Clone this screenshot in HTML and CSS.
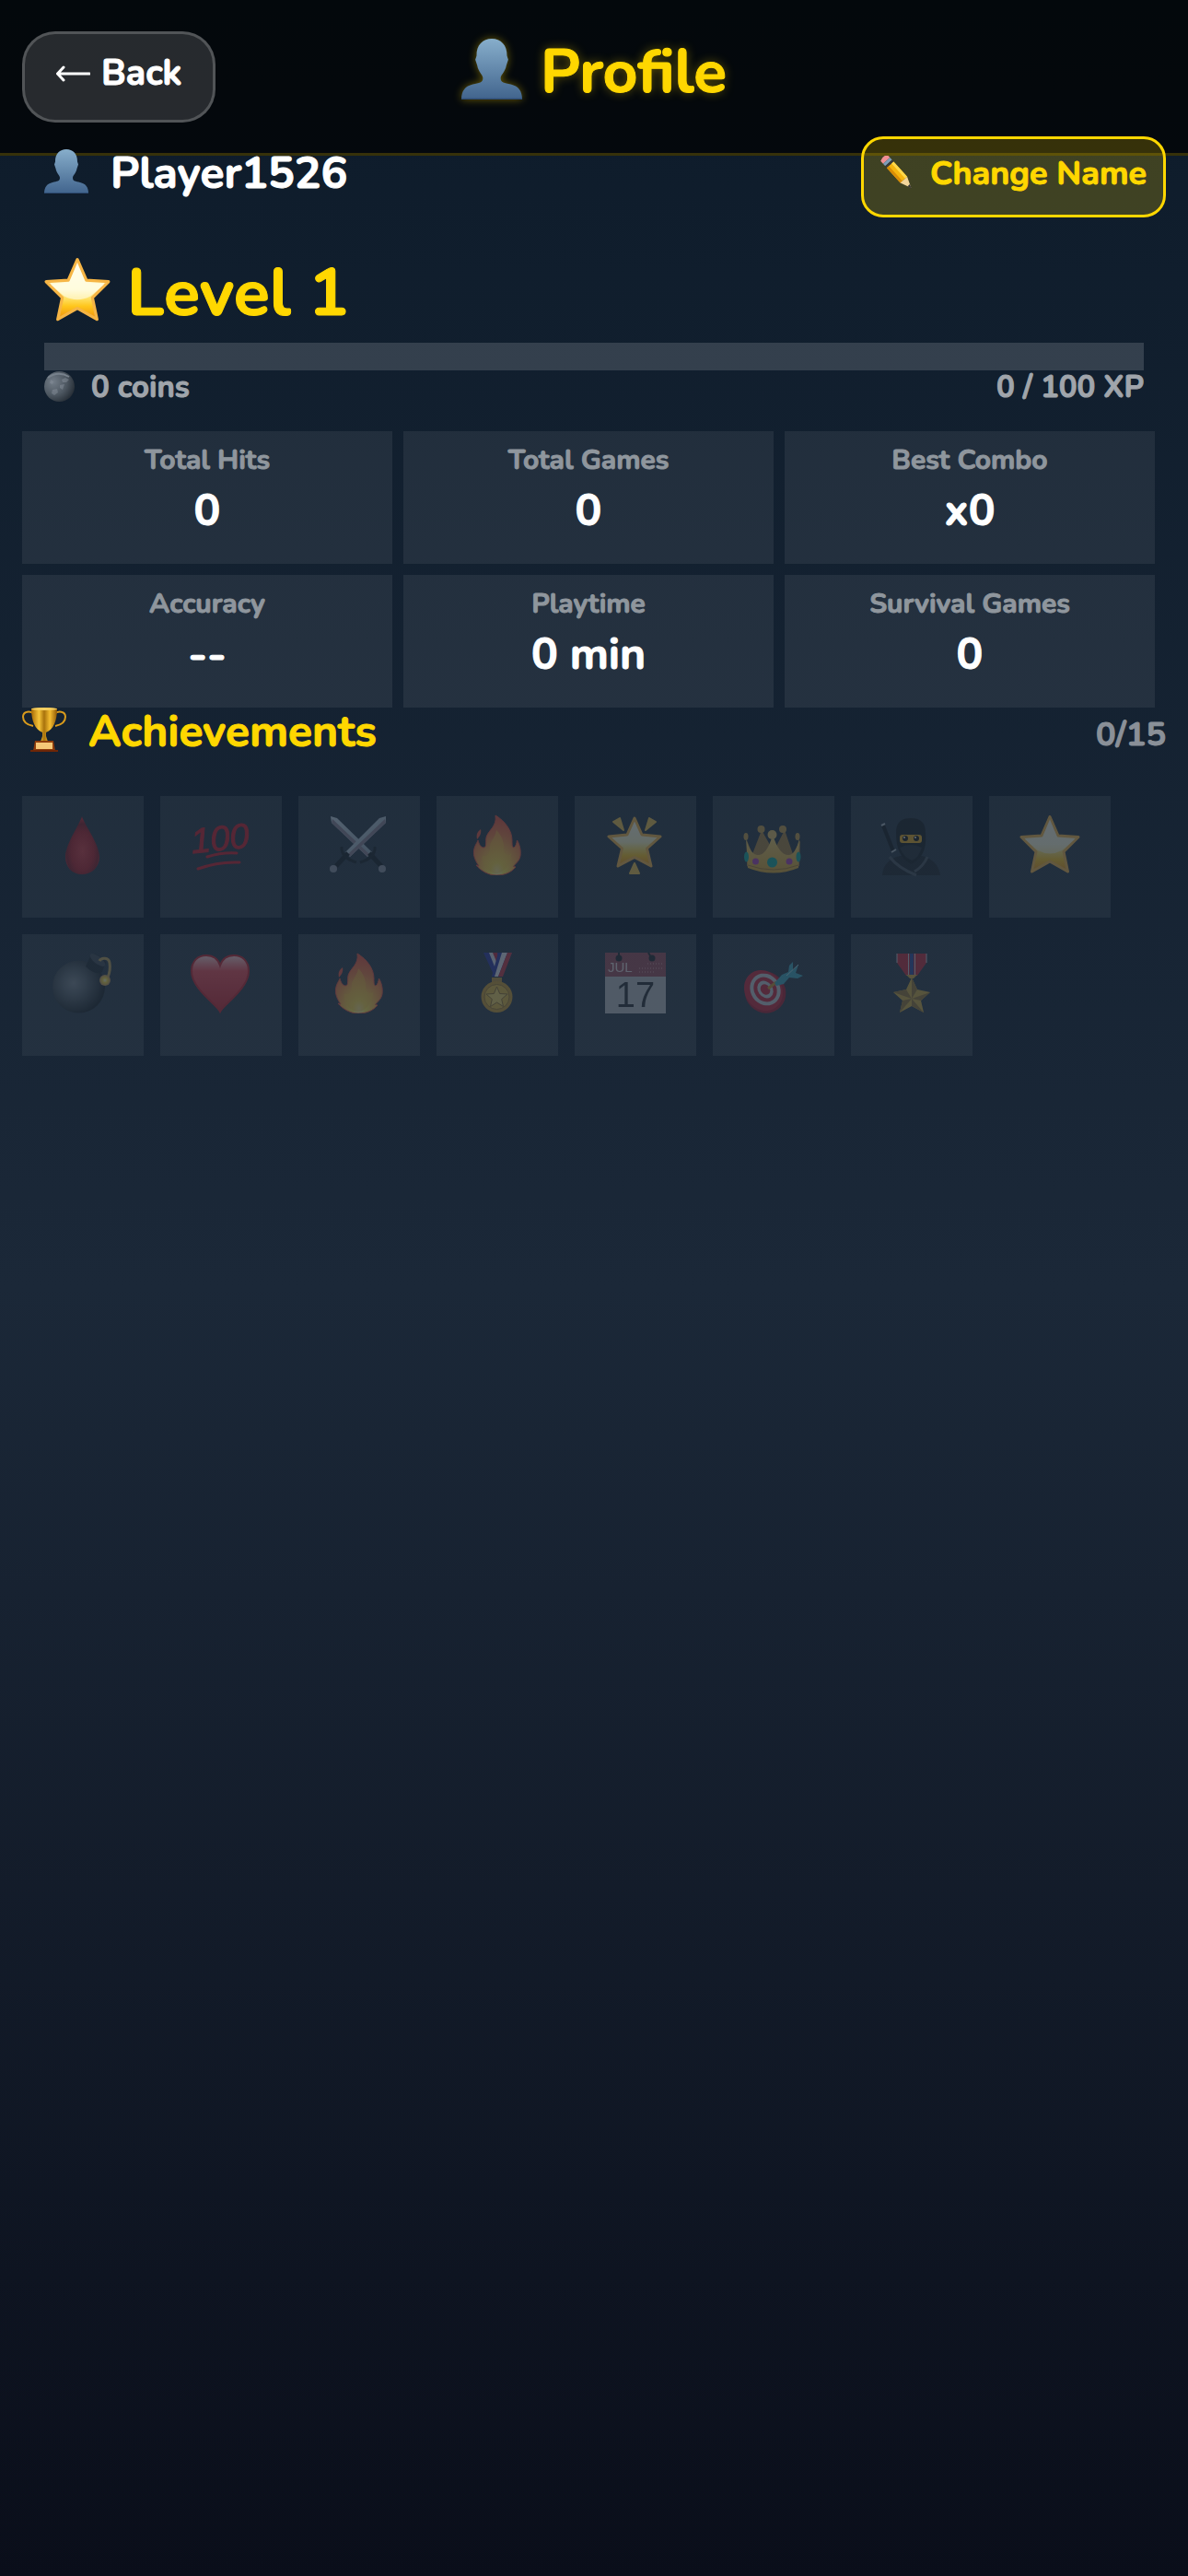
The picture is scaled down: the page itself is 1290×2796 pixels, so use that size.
FILE: index.html
```html
<!DOCTYPE html>
<html lang="en">
<head>
<meta charset="utf-8">
<meta name="viewport" content="width=device-width, initial-scale=1">
<title>Profile</title>
<link rel="stylesheet" href="styles.css">
</head>
<body>
<svg class="defs" width="0" height="0" aria-hidden="true">
  <defs>
    <linearGradient id="bust-fill" x1="0" y1="0" x2="0" y2="1"><stop offset="0" stop-color="#87aecb"/><stop offset="1" stop-color="#41648d"/></linearGradient>
    <linearGradient id="star-fill" x1="0" y1="0" x2="0" y2="1"><stop offset="0" stop-color="#fffdf0"/><stop offset=".5" stop-color="#fff9c8"/><stop offset=".64" stop-color="#ffe36a"/><stop offset=".78" stop-color="#ffc61c"/><stop offset="1" stop-color="#ef8f0c"/></linearGradient>
    <linearGradient id="gold-fill" x1="0" y1="0" x2="1" y2="0"><stop offset="0" stop-color="#a86a05"/><stop offset=".3" stop-color="#f6c53a"/><stop offset=".5" stop-color="#a8720c"/><stop offset=".72" stop-color="#f4bd31"/><stop offset="1" stop-color="#8f5805"/></linearGradient>
    <radialGradient id="coin-fill" cx=".3" cy=".35" r=".8"><stop offset="0" stop-color="#737d88"/><stop offset=".55" stop-color="#4d5761"/><stop offset="1" stop-color="#20272f"/></radialGradient>
    <radialGradient id="drop-fill" cx=".5" cy=".6" r=".55"><stop offset="0" stop-color="#d8343c"/><stop offset=".6" stop-color="#b41722"/><stop offset=".85" stop-color="#84101a"/><stop offset="1" stop-color="#c51c28"/></radialGradient>
    <linearGradient id="heart-fill" x1="0" y1="0" x2="0" y2="1"><stop offset="0" stop-color="#ffd0d4"/><stop offset=".28" stop-color="#ee4450"/><stop offset="1" stop-color="#c41b27"/></linearGradient>
    <radialGradient id="bomb-fill" cx=".4" cy=".43" r=".6"><stop offset="0" stop-color="#78828c"/><stop offset=".35" stop-color="#56616b"/><stop offset="1" stop-color="#10171e"/></radialGradient>
    <radialGradient id="spark-fill"><stop offset="0" stop-color="#fffbd0"/><stop offset=".45" stop-color="#f5d436"/><stop offset="1" stop-color="#b98c5a"/></radialGradient>
    <radialGradient id="fire-fill" cx=".5" cy=".92" r=".85"><stop offset="0" stop-color="#fff8c0"/><stop offset=".16" stop-color="#ffe84a"/><stop offset=".42" stop-color="#f9b13e"/><stop offset=".7" stop-color="#f07a3c"/><stop offset="1" stop-color="#ec5238"/></radialGradient>
    <linearGradient id="crown-fill" x1="0" y1="0" x2="0" y2="1"><stop offset="0" stop-color="#f3cf6c"/><stop offset="1" stop-color="#d6a22c"/></linearGradient>
    <linearGradient id="blade-fill" x1="0" y1="0" x2="1" y2="1"><stop offset="0" stop-color="#c9d8e6"/><stop offset="1" stop-color="#93a7b8"/></linearGradient>
    <symbol id="bust" viewBox="0 0 48 48"><path d="M24 0C31 0 36.300 5 36 13.500L37 16.500L35.500 21C34.700 26 31 28.500 31 31C31 35 34 34.500 39 36C45 37.500 48 41 48 48H0C0 41 3 37.500 9 36C14 34.500 17 35 17 31C17 28.500 13.300 26 12.500 21L11 16.500L12 13.500C11.700 5 17 0 24 0Z" fill="url(#bust-fill)"/><path d="M0 47H48V48H0Z" fill="#2d4a70"/></symbol>
    <symbol id="star" viewBox="0 0 66 66"><path d="M33 2.500L42 23L64 24.500L48 40.500L52.500 62L33 51L13.500 62L18 40.500L2 24.500L24 23Z" fill="url(#star-fill)" stroke="#f6b545" stroke-width="3" stroke-linejoin="round"/><path d="M33 5L41 25L60 27L46 39Q33 46 20 39L6 27L25 25Z" fill="#fffdeb" opacity=".6"/></symbol>
    <symbol id="fire" viewBox="0 0 66 66"><path d="M31 1C41 7 49 17 49 28C49 32 49 36 51 36C53 35 54 31 54.500 28C57 32 59 39 58 45C57 51 52 54 50.500 56.500L53 57C48 63 41 66 32 66C23 66 15 61 10 55L13 56C9 50 7 45 7.500 40C8 34 11 31 12 28C13 32 15 36 18 36C22 36 20 29 21 25C23 17 33 13 31 1Z" fill="url(#fire-fill)" stroke="#e8503c" stroke-width="1"/><path d="M15 16C11 19 10 22 11 27C14 24 16 20 15 16Z" fill="#e8503c"/><path d="M32 17C38 23 41 31 40 39C42 45 46 45 48 42C49 51 42 63 32 64C22 63 15 53 17 44C21 47 25 43 25 35C25 29 31 25 32 17Z" fill="#f9c437" opacity=".5"/></symbol>
  </defs>
</svg>

<header class="topbar">
  <button class="back" type="button">
    <svg class="back-arrow" viewBox="0 0 38 20" aria-hidden="true"><path d="M37 10H3M9 3L2.500 10L9 17" fill="none" stroke="#fff" stroke-width="3" stroke-linecap="round" stroke-linejoin="round"/></svg>
    Back
  </button>
  <h1 class="title"><svg class="icon-title" aria-hidden="true"><use href="#bust"/></svg>Profile</h1>
</header>

<main class="content">
  <section class="player">
    <p class="player-name"><svg class="icon-md" aria-hidden="true"><use href="#bust"/></svg>Player1526</p>
    <button class="rename" type="button">
      <svg class="icon-sm" viewBox="0 0 36 36" aria-hidden="true"><g transform="rotate(48 18 18)"><path d="M-3 13H1V23H-3Q-6 18 -3 13Z" fill="#f08f95"/><path d="M1 13H4.500V23H1Z" fill="#7d9cb8"/><path d="M4.500 13H7V23H4.500Z" fill="#39393b"/><path d="M7 13H29V23H7Z" fill="#f5b50f"/><path d="M7 13H29V16H7Z" fill="#ffd84a"/><path d="M7 20H29V23H7Z" fill="#d88c07"/><path d="M29 13L41 18L29 23Z" fill="#f2d59b"/><path d="M37 16.400L41.500 18L37 19.600Z" fill="#333"/></g></svg>
      Change Name
    </button>
  </section>

  <section class="level">
    <h2 class="level-title"><svg class="icon-lg" aria-hidden="true"><use href="#star"/></svg>Level 1</h2>
    <div class="xp-bar" role="progressbar" aria-label="Experience" aria-valuemin="0" aria-valuemax="100" aria-valuenow="0"><div class="xp-fill" style="width: 0%"></div></div>
    <div class="level-meta">
      <span class="coins"><svg class="icon-coin" viewBox="0 0 33 33" aria-hidden="true"><circle cx="16.500" cy="16.500" r="16.500" fill="url(#coin-fill)"/><path d="M7 9L10 11L9 14L6 13ZM19 9L23 7L27 9L24 12L20 12ZM17 15L22 14L20 20L17 18ZM9 20L14 19L15 23L11 26L8 24Z" fill="#8b95a0" opacity=".45"/><path d="M4 7Q15-1 27 6" fill="none" stroke="#77818c" stroke-width="2"/></svg>0 coins</span>
      <span>0 / 100 XP</span>
    </div>
  </section>

  <dl class="stats">
    <div class="stat"><dt>Total Hits</dt><dd>0</dd></div>
    <div class="stat"><dt>Total Games</dt><dd>0</dd></div>
    <div class="stat"><dt>Best Combo</dt><dd>x0</dd></div>
    <div class="stat"><dt>Accuracy</dt><dd>--</dd></div>
    <div class="stat"><dt>Playtime</dt><dd>0 min</dd></div>
    <div class="stat"><dt>Survival Games</dt><dd>0</dd></div>
  </dl>

  <section>
    <div class="section-head">
      <h2 class="section-title"><svg class="icon-md" viewBox="0 0 48 48" aria-hidden="true"><path d="M13 7C9 3 1 4 1 10C1 16 7 19 12 20M35 7C39 3 47 4 47 10C47 16 41 19 36 20" fill="none" stroke="#d99b1c" stroke-width="2"/><path d="M10 1Q24-1 38 1C38 14 34 24 26 27V31L28 37H20L22 31V27C14 24 10 14 10 1Z" fill="url(#gold-fill)"/><ellipse cx="24" cy="1.500" rx="14" ry="1.500" fill="#f7d163"/><path d="M14 36H34L36 47H12Z" fill="#8e3d0c"/><path d="M9 46H39V48H9Z" fill="#6e2607"/><path d="M15 38H33V45H15Z" fill="#f5c878"/></svg>Achievements</h2>
      <span class="count">0/15</span>
    </div>
    <ul class="badges">
      <li class="badge"><svg viewBox="0 0 66 66" aria-hidden="true"><path d="M32 2C34 10 51 32 51 46C51 57 43 65 32 65C21 65 14 57 14 46C14 32 30 10 32 2Z" fill="url(#drop-fill)"/></svg></li>
      <li class="badge"><svg viewBox="0 0 66 66" aria-hidden="true"><text x="1" y="39" class="hundred" transform="rotate(-6 32 33)">100</text><path d="M18 46Q34 41 50 42M8 59Q30 51 53 52" fill="none" stroke="#cf1624" stroke-width="3" stroke-linecap="round"/></svg></li>
      <li class="badge"><svg viewBox="0 0 66 66" aria-hidden="true"><path d="M2 2L9 4L47 41L42 46L3 9Z" fill="url(#blade-fill)"/><path d="M3 9L42 46L44 43L4 5Z" fill="#8c8193"/><path d="M44 42L57 56" stroke="#0c141b" stroke-width="5"/><path d="M50 35Q51 47 34 52" fill="none" stroke="#10181f" stroke-width="3"/><path d="M62 2L55 4L18 41L23 46L62 9Z" fill="url(#blade-fill)"/><path d="M62 9L23 46L21 43L61 5Z" fill="#8c8193"/><path d="M21 42L8 56" stroke="#0c141b" stroke-width="5"/><path d="M14 35Q13 47 30 52" fill="none" stroke="#10181f" stroke-width="3"/><circle cx="5" cy="59" r="4" fill="#8a90a0"/><circle cx="58" cy="59" r="4" fill="#8a90a0"/></svg></li>
      <li class="badge"><svg aria-hidden="true"><use href="#fire"/></svg></li>
      <li class="badge"><svg viewBox="0 0 66 66" aria-hidden="true"><path d="M32 4L40 22L60 24L45.500 37L50 56L32 46.500L14 56L18.500 37L4 24L24 22Z" fill="url(#star-fill)" stroke="#f6b545" stroke-width="3" stroke-linejoin="round"/><path d="M9 8L16 4L20 17ZM48 4L55 8L44 17ZM32 53L37 64H27Z" fill="#efc04a" stroke="#efc04a" stroke-width="2" stroke-linejoin="round"/></svg></li>
      <li class="badge"><svg viewBox="0 0 66 66" aria-hidden="true"><path d="M4 28L4 56Q33 70 61 56L62 28L54 43L45 17L33 40L20 17L10 43Z" fill="#a67e3c"/><path d="M3 26Q8 44 16 44Q26 44 32 22Q39 44 49 44Q57 44 61 26L60 58Q33 69 5 58Z" fill="url(#crown-fill)"/><path d="M5 55Q33 65 60 55" fill="none" stroke="#a8792a" stroke-width="1"/><circle cx="19.500" cy="16" r="4" fill="#c59b45"/><circle cx="43" cy="16" r="4" fill="#c59b45"/><circle cx="31.500" cy="22" r="5" fill="#e3be62"/><ellipse cx="3" cy="24" rx="2.500" ry="4" fill="#c59b45"/><ellipse cx="59" cy="24" rx="2.500" ry="4" fill="#c59b45"/><circle cx="31.500" cy="52" r="5.500" fill="#0ea79b"/><ellipse cx="3.500" cy="46" rx="2.500" ry="5.500" fill="#0ea79b"/><ellipse cx="60" cy="46" rx="2.500" ry="5.500" fill="#0ea79b"/><circle cx="13.500" cy="51" r="3.500" fill="#a93fb5"/><circle cx="50" cy="51" r="3.500" fill="#a93fb5"/></svg></li>
      <li class="badge"><svg viewBox="0 0 66 66" aria-hidden="true"><path d="M2 12L13 40" stroke="#0c1116" stroke-width="4"/><path d="M0 12L4 10M11 41L16 38" stroke="#a9b4bd" stroke-width="2"/><path d="M1 66C2 54 9 48 20 45L44 45C55 48 62 54 64 66Z" fill="#161d24"/><path d="M16 20C16 8 22 4 32 4C43 4 48 9 48 20C49 34 47 46 33 54C20 48 16 36 16 20Z" fill="#10161c"/><path d="M20 36Q32 30 44 36Q40 48 33 50Q24 46 20 36Z" fill="#1e262e"/><rect x="20" y="22" width="24" height="9" rx="3" fill="#e7a91d"/><circle cx="26" cy="26" r="3" fill="#111"/><circle cx="38" cy="26" r="3" fill="#111"/><circle cx="25" cy="25" r="1" fill="#fff"/><circle cx="37" cy="25" r="1" fill="#fff"/><path d="M9 46Q18 58 38 66M50 46Q46 56 36 62" fill="none" stroke="#414b56" stroke-width="3"/></svg></li>
      <li class="badge"><svg aria-hidden="true"><use href="#star"/></svg></li>
      <li class="badge"><svg viewBox="0 0 66 66" aria-hidden="true"><circle cx="28.500" cy="37" r="28.500" fill="url(#bomb-fill)"/><path d="M36 15L42 2Q47-1 58 10L54 21Q46 25 36 15Z" fill="#18212a"/><ellipse cx="49" cy="8" rx="10" ry="4" transform="rotate(38 49 8)" fill="#39434d"/><path d="M51 9C53 5 61 5 62 11C63 17 62 22 60 27" fill="none" stroke="#b99c52" stroke-width="3"/><circle cx="57" cy="30" r="6" fill="url(#spark-fill)"/></svg></li>
      <li class="badge"><svg viewBox="0 0 66 66" aria-hidden="true"><path d="M32 64C28 56 1 39 1 20C1 9 8 3 17 3C25 3 30 8 32 14C34 8 39 3 47 3C56 3 63 9 63 20C63 39 36 56 32 64Z" fill="url(#heart-fill)" stroke="#c41b27" stroke-width="2"/></svg></li>
      <li class="badge"><svg aria-hidden="true"><use href="#fire"/></svg></li>
      <li class="badge"><svg viewBox="0 0 66 66" aria-hidden="true"><path d="M18 0H34L38 26H30Z" fill="#2632a0"/><path d="M24 0H30L34 14L32 20Z" fill="#d8dce8"/><path d="M28 0H33L35 12H33Z" fill="#b8203a"/><path d="M49 0H34L27 26H38Z" fill="#2632a0"/><path d="M44 0H38L30 26H34Z" fill="#e4e6ee"/><path d="M49 0H44L34 26H39Z" fill="#c33040"/><path d="M27 27H38V33H27Z" fill="#b98e32"/><circle cx="32.500" cy="48" r="17" fill="#c8962a"/><circle cx="32.500" cy="48" r="13.500" fill="#e0b436" stroke="#9c7426" stroke-width="1"/><path d="M32.500 37L35.700 44.500L44 45L37.700 50.500L39.500 58.500L32.500 54L25.500 58.500L27.300 50.500L21 45L29.300 44.500Z" fill="#efd05a" stroke="#8f6a24" stroke-width="1"/></svg></li>
      <li class="badge"><svg viewBox="0 0 66 66" aria-hidden="true"><path d="M0 0H66V66H0Z" fill="#b9bdc2"/><path d="M0 0H66V26H0Z" fill="#984856"/><circle cx="15" cy="6" r="3.500" fill="#1a1f26"/><circle cx="51" cy="6" r="3.500" fill="#1a1f26"/><path d="M15 0V6M47 0L50 5" stroke="#1a1f26" stroke-width="2"/><path d="M46 12H64M37 17H64M37 21H53" stroke="#d8a0a8" stroke-width="1" stroke-dasharray="1 2"/><text x="3" y="21" class="month">JUL</text><text x="33" y="59" class="day">17</text></svg></li>
      <li class="badge"><svg viewBox="0 0 66 66" aria-hidden="true"><ellipse cx="24" cy="43" rx="22" ry="23" transform="rotate(-35 24 43)" fill="#a6152a"/><ellipse cx="22" cy="41" rx="20" ry="23" transform="rotate(-35 22 41)" fill="#c41f35"/><ellipse cx="24" cy="40" rx="16" ry="18" transform="rotate(-35 24 40)" fill="#c2cad2"/><ellipse cx="24" cy="40" rx="12" ry="14" transform="rotate(-35 24 40)" fill="#c41f35"/><ellipse cx="24" cy="40" rx="8" ry="10" transform="rotate(-35 24 40)" fill="#c2cad2"/><ellipse cx="24" cy="40" rx="5" ry="6" transform="rotate(-35 24 40)" fill="#c41f35"/><path d="M27 39L36 32" stroke="#c9932b" stroke-width="3"/><path d="M34 33L42 24L49 21L50 14L54 10V19L60 13L57 22L65 25L59 28L50 27L44 34L36 36Z" fill="#37a3bc"/><path d="M47 25L60 13" stroke="#a8dbe6" stroke-width="1"/></svg></li>
      <li class="badge"><svg viewBox="0 0 66 66" aria-hidden="true"><path d="M17 1H49V11L39 25H27L17 11Z" fill="#c02436"/><path d="M17 1V11M49 1V11M29.500 1V25M36.500 1V25" stroke="#c8ccd8" stroke-width="1"/><path d="M31 1H35V25H31Z" fill="#27459c"/><path d="M27 24H39L35 28H31Z" fill="#d3a63a"/><path d="M33 27L39 40L53 43L43 52L46 65L33 58L20 65L23 52L13 43L27 40Z" fill="#cfa83a"/><path d="M33 50L33 27L39 40ZM33 50L53 43L43 52ZM33 50L46 65L33 58ZM33 50L20 65L23 52ZM33 50L13 43L27 40Z" fill="#94702c"/></svg></li>
    </ul>
  </section>
</main>
</body>
</html>
```
FILE: styles.css
```css
* {
  box-sizing: border-box;
}

:root {
  --gold: #ffd700;
  --tile: rgba(255, 255, 255, 0.07);
}

body {
  margin: 0;
  min-height: 100vh;
  background: linear-gradient(180deg, #0d1b2a 0%, #1b2838 50%, #0a0e1a 100%);
  color: #fff;
  font-family: Nunito, Lato, "Noto Sans", sans-serif;
  font-weight: 700;
  -webkit-text-stroke: 1px currentColor;
}

h1,
h2,
p,
dl,
dd,
ul {
  margin: 0;
  padding: 0;
  font-weight: inherit;
}

button {
  font: inherit;
  cursor: pointer;
}

svg {
  display: block;
  flex: none;
}

.defs {
  position: absolute;
}

.topbar {
  display: grid;
  grid-template-columns: 1fr auto 1fr;
  align-items: start;
  padding: 34px 24px 33px;
  border-bottom: 3px solid rgba(255, 215, 0, 0.2);
  background: rgba(0, 0, 0, 0.7);
}

.back {
  display: flex;
  align-items: center;
  justify-self: start;
  gap: 12px;
  padding: 19px 34px 26px 33px;
  border: 3px solid rgba(255, 255, 255, 0.2);
  border-radius: 36px;
  background: rgba(255, 255, 255, 0.14);
  color: #fff;
  font-size: 39px;
  line-height: 48px;
}

.back-arrow {
  width: 38px;
  height: 20px;
}

.title {
  display: flex;
  align-items: center;
  gap: 20px;
  color: var(--gold);
  font-size: 66px;
  line-height: 88px;
  text-shadow: 0 0 12px rgba(255, 215, 0, 0.4);
}

.icon-title {
  width: 66px;
  height: 66px;
  margin-bottom: 6px;
  filter: drop-shadow(0 0 5px rgba(255, 215, 0, 0.4));
}

.icon-lg {
  width: 72px;
  height: 72px;
  margin-bottom: 6px;
}

.icon-md {
  width: 48px;
  height: 48px;
  margin-bottom: 4px;
}

.icon-sm {
  width: 36px;
  height: 36px;
  margin-bottom: 4px;
}

.icon-coin {
  width: 33px;
  height: 33px;
  margin-bottom: 4px;
}

.content {
  margin-top: -21px;
  padding: 0 24px 48px;
}

.player {
  display: flex;
  align-items: flex-start;
  justify-content: space-between;
}

.player-name {
  display: flex;
  align-items: center;
  gap: 24px;
  padding: 11px 0 0 24px;
  font-size: 48px;
  line-height: 58px;
}

.rename {
  display: flex;
  align-items: center;
  gap: 18px;
  padding: 16px 18px 22px;
  border: 3px solid var(--gold);
  border-radius: 24px;
  background: rgba(255, 215, 0, 0.2);
  color: var(--gold);
  font-size: 36px;
  line-height: 44px;
}

.level {
  padding: 34px 24px 28px;
}

.level-title {
  display: flex;
  align-items: center;
  gap: 18px;
  color: var(--gold);
  font-size: 72px;
  line-height: 96px;
}

.xp-bar {
  height: 30px;
  margin-top: 6px;
  background: rgba(255, 255, 255, 0.15);
}

.xp-fill {
  height: 100%;
  background: var(--gold);
}

.level-meta {
  display: flex;
  justify-content: space-between;
  color: #a0a5ab;
  font-size: 33px;
  line-height: 38px;
}

.coins {
  display: flex;
  align-items: center;
  gap: 18px;
}

.stats {
  display: grid;
  grid-template-columns: repeat(3, 1fr);
  gap: 12px;
  margin-right: 12px;
}

.stat {
  display: grid;
  gap: 8px;
  padding: 14px 12px 30px;
  background: var(--tile);
  text-align: center;
}

.stat dt {
  color: #8f969d;
  font-size: 30px;
  line-height: 36px;
}

.stat dd {
  font-size: 48px;
  line-height: 56px;
}

.section-head {
  display: flex;
  align-items: flex-end;
  justify-content: space-between;
}

.section-title {
  display: flex;
  align-items: center;
  gap: 24px;
  color: var(--gold);
  font-size: 48px;
  line-height: 52px;
}

.count {
  color: #8a9098;
  font-size: 36px;
  line-height: 44px;
}

.badges {
  display: flex;
  flex-wrap: wrap;
  gap: 18px;
  margin-top: 44px;
  list-style: none;
}

.badge {
  display: flex;
  justify-content: center;
  width: 132px;
  height: 132px;
  padding-top: 20px;
  background: rgba(255, 255, 255, 0.05);
}

.badge svg {
  width: 66px;
  height: 66px;
  overflow: visible;
  opacity: 0.3;
}

.badge text {
  font-weight: 400;
  -webkit-text-stroke: 0;
}

.badge .hundred {
  fill: #cf1624;
  stroke: #cf1624;
  stroke-width: 1px;
  font-family: "Liberation Sans Narrow", "Liberation Sans", sans-serif;
  font-size: 38px;
  font-style: italic;
}

.badge .month {
  fill: #e6d8dc;
  font-family: "Liberation Sans", sans-serif;
  font-size: 15px;
}

.badge .day {
  fill: #22262c;
  font-family: "Liberation Sans", sans-serif;
  font-size: 38px;
  text-anchor: middle;
}
```
